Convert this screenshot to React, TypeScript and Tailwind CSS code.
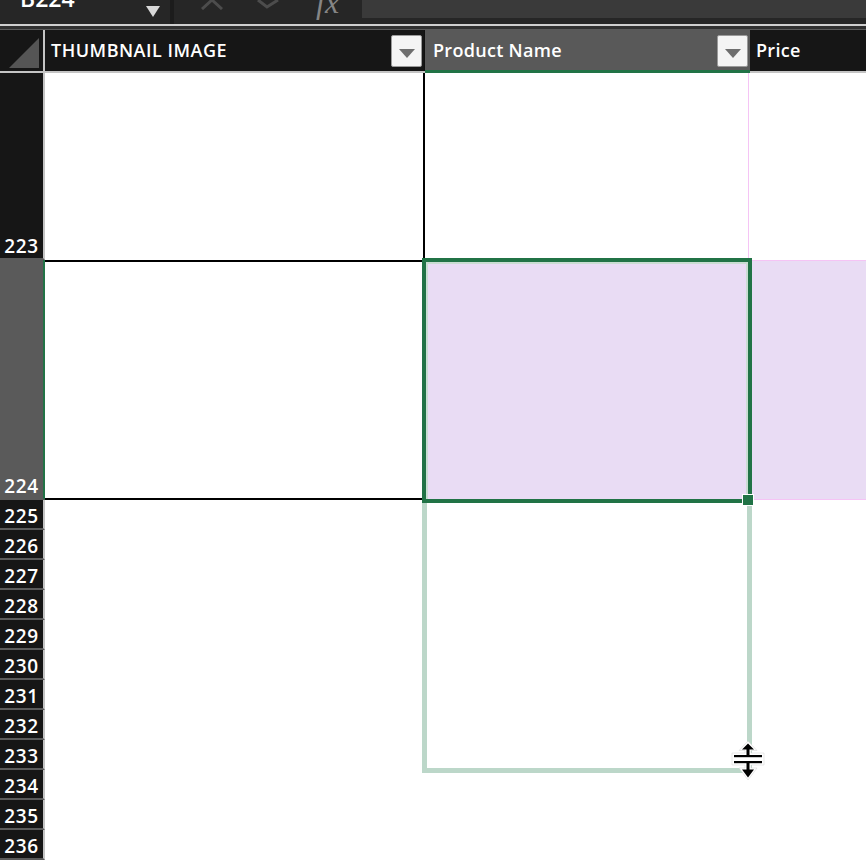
import React from 'react';

const font = { fontFamily: '"Open Sans", "Liberation Sans", sans-serif' };

function FilterButton() {
  return (
    <div className="w-[31px] h-[32px] bg-[#f4f4f4] border border-[#9a9a9a] rounded-[2px] flex items-end justify-center pb-[8px]">
      <svg width="16" height="9" viewBox="0 0 16 9">
        <path d="M0 0 H16 L8 9 Z" fill="#6e6e6e" />
      </svg>
    </div>
  );
}

function RowHeader({ n, h, selected }: { n: number; h: number; selected?: boolean }) {
  return (
    <div
      className={
        'w-[45px] shrink-0 flex items-end justify-center pb-[2px] border-b-2 border-[#5a5a5a] border-r-2 ' +
        (selected ? 'bg-[#5a5a5a] border-r-[#217346]' : 'bg-[#161616] border-r-[#c4c4c4]')
      }
      style={{ height: h }}
    >
      <span className="text-white text-[19px] font-semibold leading-none tracking-[0.6px]">{n}</span>
    </div>
  );
}

export default function App() {
  const smallRows = [225, 226, 227, 228, 229, 230, 231, 232, 233, 234, 235, 236];

  return (
    <div className="w-[866px] h-[860px] overflow-hidden bg-white relative" style={font}>
      {/* formula bar */}
      <div className="h-[24px] bg-[#262626] flex overflow-hidden">
        <div className="w-[170px] shrink-0 relative flex">
          <span className="text-white text-[23px] font-semibold leading-none pl-[20px] -mt-[13px]">B224</span>
          <svg className="absolute left-[146px] top-[6px]" width="14" height="11" viewBox="0 0 14 11">
            <path d="M0 0 H14 L7 11 Z" fill="#d8d8d8" />
          </svg>
        </div>
        <div className="w-[4px] bg-[#1c1c1c]" />
        <div className="w-[188px] shrink-0 relative">
          <svg className="absolute left-[26px] top-0" width="24" height="10" viewBox="0 0 24 10">
            <path d="M2 9 L12 0 L22 9" stroke="#4c4c4c" strokeWidth="3" fill="none" />
          </svg>
          <svg className="absolute left-[82px] top-0" width="24" height="9" viewBox="0 0 24 9">
            <path d="M2 0 L11 7 L22 0" stroke="#4c4c4c" strokeWidth="3" fill="none" />
          </svg>
          <span
            className="absolute left-[142px] -top-[14px] text-[#858585] text-[32px] italic leading-none"
            style={{ fontFamily: '"Liberation Serif", serif' }}
          >
            fx
          </span>
        </div>
        <div className="flex-1 h-[18px] bg-[#3a3a3a]" />
      </div>
      <div className="h-[2px] bg-[#cfcfcf]" />
      <div className="h-[3px] bg-[#303030]" />
      <div className="h-[1px] bg-[#5a5a5a]" />

      {/* column headers */}
      <div className="h-[43px] flex border-b-2 border-[#c4c4c4]">
        <div className="w-[45px] shrink-0 bg-[#161616] border-r-2 border-[#c4c4c4] flex items-end justify-end pr-[4px] pb-[3px]">
          <svg width="30" height="30" viewBox="0 0 30 30">
            <path d="M30 0 V30 H0 Z" fill="#555555" />
          </svg>
        </div>
        <div className="w-[379px] shrink-0 bg-[#161616] flex items-center justify-between pl-[6px] pr-[2px]">
          <span className="text-white text-[18px] font-semibold tracking-[0.5px]">THUMBNAIL IMAGE</span>
          <FilterButton />
        </div>
        <div className="w-[326px] shrink-0 bg-[#595959] border-l border-[#111] flex items-center justify-between pl-[8px] pr-[2px] relative">
          <span className="text-white text-[18px] font-semibold tracking-[0.3px]">Product Name</span>
          <FilterButton />
          <div className="absolute left-0 right-0 -bottom-[2px] h-[3px] bg-[#217346]" />
        </div>
        <div className="flex-1 bg-[#161616] flex items-center pl-[6px]">
          <span className="text-white text-[18px] font-semibold tracking-[0.3px]">Price</span>
        </div>
      </div>

      {/* rows */}
      <div className="flex">
        <RowHeader n={223} h={187} />
        <div className="w-[380px] shrink-0 border-r-2 border-black" />
        <div className="w-[324px] shrink-0 border-r border-[#f5c4f5]" />
        <div className="flex-1" />
      </div>
      <div className="flex">
        <RowHeader n={224} h={240} selected />
        <div className="w-[380px] shrink-0 border-y-2 border-black" />
        <div className="w-[325px] shrink-0 bg-[#e9dcf4]" />
        <div className="flex-1 bg-[#e9dcf4] border-y border-[#f5c4f5]" />
      </div>
      {smallRows.map((n) => (
        <div key={n} className="flex">
          <RowHeader n={n} h={30} />
          <div className="flex-1" />
        </div>
      ))}

      {/* selected cell */}
      <div className="absolute left-[422px] top-[258px] w-[330px] h-[245px] border-4 border-[#217346]">
        <div className="w-full h-full border-l-2 border-t-2 border-r-2 border-[#c9ddd2]" />
      </div>
      {/* resize preview */}
      <div className="absolute left-[422px] top-[503px] w-[330px] h-[270px] border-[5px] border-t-0 border-[#bcd7c9]" />
      {/* fill handle */}
      <div className="absolute left-[742px] top-[494px] w-[12px] h-[12px] bg-[#217346] border border-white" />
      {/* row resize cursor */}
      <svg className="absolute left-[731px] top-[741px]" width="34" height="40" viewBox="0 0 34 40">
        <path
          d="M17 0 L26 9.5 H20 V12 H33 V24 H20 V27 H26 L17 39 L8 27 H14 V24 H1 V12 H14 V9.5 H8 Z"
          fill="white"
          stroke="#d0d0d0"
          strokeWidth="0.5"
        />
        <path d="M17 2.5 L23 8.5 H18.5 V14 H15.5 V8.5 H11 Z" fill="black" />
        <path d="M17 36.5 L23 28.5 H18.5 V22 H15.5 V28.5 H11 Z" fill="black" />
        <rect x="3" y="14" width="28" height="2.2" fill="black" />
        <rect x="3" y="20" width="28" height="2.2" fill="black" />
      </svg>
    </div>
  );
}
